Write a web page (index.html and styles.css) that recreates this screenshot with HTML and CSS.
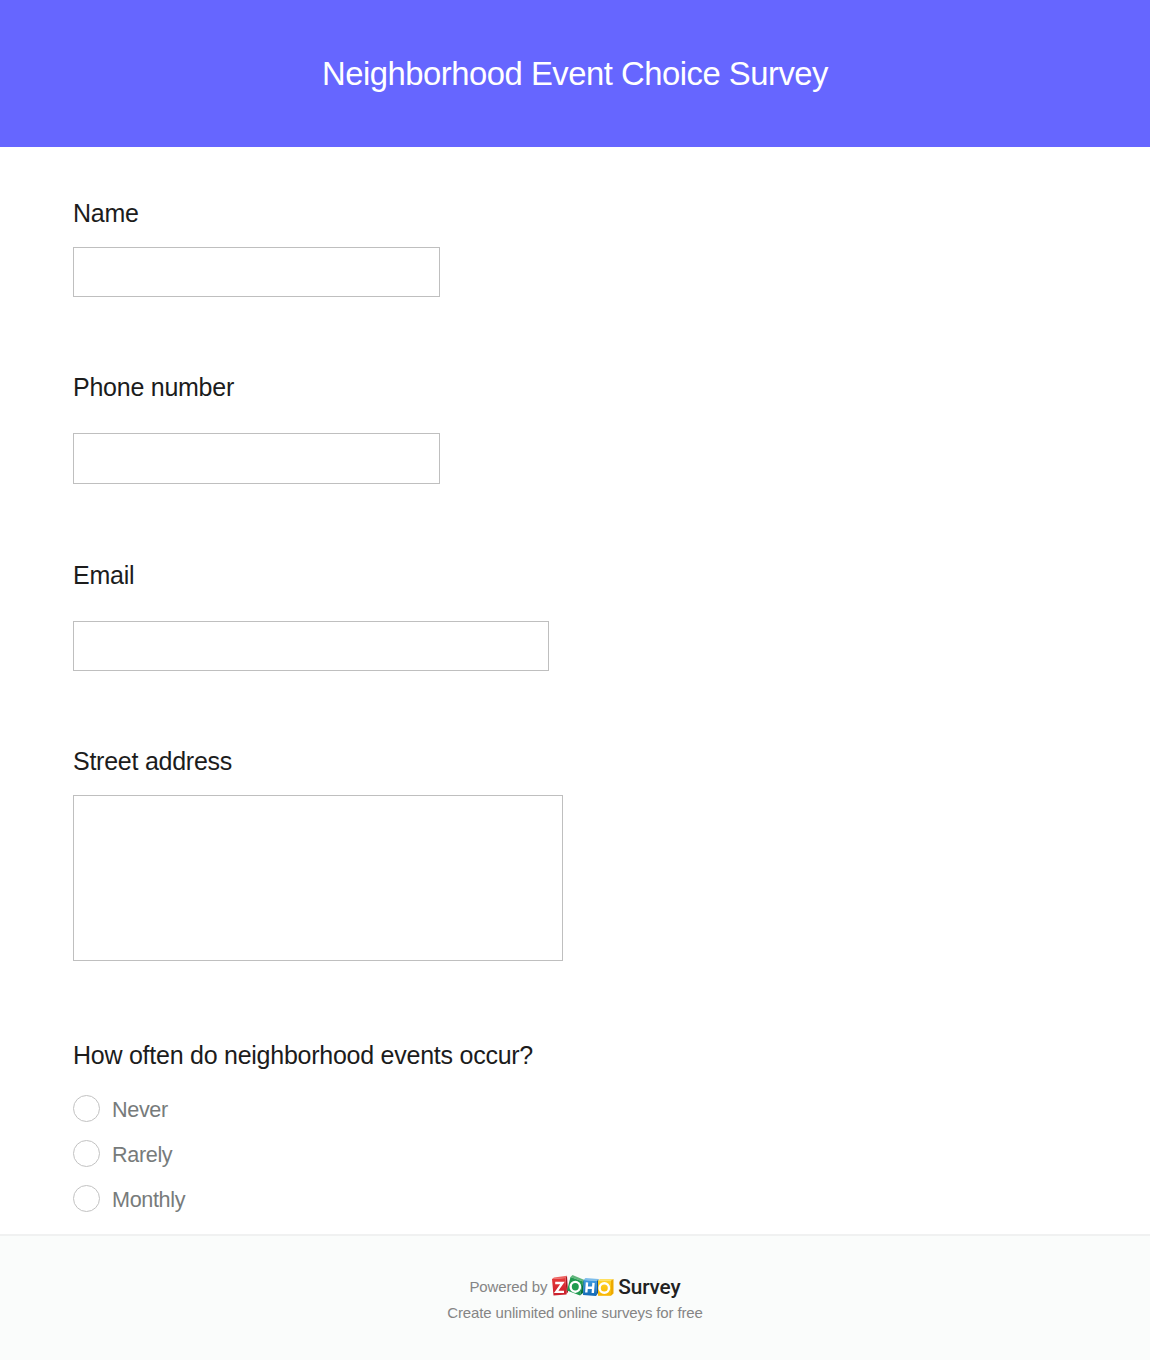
FILE: index.html
```html
<!DOCTYPE html>
<html lang="en">
<head>
<meta charset="utf-8">
<title>Neighborhood Event Choice Survey</title>
<link rel="stylesheet" href="styles.css">
</head>
<body>
<header class="banner"><h1 class="title">Neighborhood Event Choice Survey</h1></header>
<main class="survey">
  <div class="question q-name"><label class="label" for="name">Name</label><input class="field" id="name" type="text"></div>
  <div class="question q-phone"><label class="label" for="phone">Phone number</label><input class="field" id="phone" type="text"></div>
  <div class="question q-email"><label class="label" for="email">Email</label><input class="field" id="email" type="text"></div>
  <div class="question q-address"><label class="label" for="address">Street address</label><textarea class="field" id="address"></textarea></div>
  <fieldset class="question q-often">
    <legend class="label">How often do neighborhood events occur?</legend>
    <div class="options">
      <label class="option"><input class="radio" type="radio" name="often"><span>Never</span></label>
      <label class="option"><input class="radio" type="radio" name="often"><span>Rarely</span></label>
      <label class="option"><input class="radio" type="radio" name="often"><span>Monthly</span></label>
    </div>
  </fieldset>
</main>
<footer class="footer">
  <div class="powered">
    <span class="by">Powered by</span>
    <svg class="logo" width="62" height="22" viewBox="0 0 62 22" aria-label="Zoho">
      <defs>
        <linearGradient id="red" x2="0" y2="1"><stop stop-color="#e63a3a"/><stop offset="1" stop-color="#c91f2b"/></linearGradient>
        <linearGradient id="blue" x2="0" y2="1"><stop stop-color="#3e9be0"/><stop offset="1" stop-color="#1269b4"/></linearGradient>
        <linearGradient id="gold" x2="0" y2="1"><stop stop-color="#ffd329"/><stop offset="1" stop-color="#f8b500"/></linearGradient>
      </defs>
      <path d="M0 4 2 2.500 15 .8 13.500 3z" fill="#ee6461"/>
      <path d="M13.500 3 15 .8 16 17 14.500 19z" fill="#a91520"/>
      <path d="M0 4 13.500 3 14.500 19.500 1.500 20.500z" fill="url(#red)"/>
      <path d="M3.200 8h7.300L4.200 16.800H12" fill="none" stroke="#fff" stroke-width="2.300"/>
      <path d="M18.500 2 20.500 0 32.500 5 31 6.500z" fill="#61b67b"/>
      <path d="M18.500 2 31 6.500 28 20.500 15 15.500z" fill="#209b50"/>
      <path d="M31 6.500 32.500 5 31 18 28 20.500z" fill="#087138"/>
      <ellipse cx="23.300" cy="11.800" rx="4.700" ry="4.900" fill="none" stroke="#fff" stroke-width="2.400"/>
      <path d="M31.500 5 33.500 3 46.500 4 45 6z" fill="#7dbdea"/>
      <path d="M31.500 5 45 6 44 21 31 20z" fill="url(#blue)"/>
      <path d="M45 6 46.500 4 46 18 44 21z" fill="#0b559a"/>
      <path d="M35 7.300 34.300 17.500M41.500 7.800l-.7 10.200M35 12.700h6" fill="none" stroke="#fff" stroke-width="2.400"/>
      <path d="M46 5.500 48 4h13.500L59 5.500z" fill="#ffe05e"/>
      <path d="M46 5.500h13v15.300H46z" fill="url(#gold)"/>
      <path d="M59 5.500 61.500 4v14.500L59 20.800z" fill="#eda900"/>
      <circle cx="52.300" cy="13" r="4.700" fill="none" stroke="#fff" stroke-width="2.400"/>
    </svg>
    <span class="product">Survey</span>
  </div>
  <div class="tagline">Create unlimited online surveys for free</div>
</footer>
</body>
</html>
```
FILE: styles.css
```css
* { box-sizing: border-box; }
body {
  margin: 0;
  height: 1360px;
  display: flex;
  flex-direction: column;
  background: #fff;
  color: #1c1c1c;
  font-family: "Liberation Sans", Arial, sans-serif;
}
.banner {
  height: 147px;
  display: flex;
  align-items: center;
  justify-content: center;
  padding-top: 1px;
  background: #6666ff;
}
.title { margin: 0; color: #fff; font-size: 32.8px; font-weight: 400; letter-spacing: -.48px; line-height: 38px; }
.survey { height: 1087px; padding: 53px 73px 0; }
.question { display: flex; flex-direction: column; margin: 0; padding: 0; border: 0; }
.label { display: block; height: 28px; padding: 0; font-size: 25px; letter-spacing: -.25px; line-height: 26px; white-space: nowrap; }
.field {
  display: block;
  width: 367px;
  height: 50px;
  margin: 0;
  padding: 8px 12px;
  border: 1px solid #bfbfbf;
  border-radius: 0;
  background: #fff;
  font: 22px "Liberation Sans", Arial, sans-serif;
  outline: 0;
  resize: none;
}
.q-name { height: 174px; gap: 19px; }
.q-phone { height: 188px; gap: 31px; }
.q-phone .field { height: 51px; }
.q-email { height: 186px; gap: 31px; }
.q-email .field { width: 476px; }
.q-address { height: 294px; gap: 19px; }
.q-address .field { width: 490px; height: 166px; }
.options { display: flex; flex-direction: column; gap: 17px; padding-top: 24px; }
.option { display: flex; align-items: center; gap: 12px; height: 28px; color: #777b7b; font-size: 21.6px; letter-spacing: -.35px; line-height: 24px; }
.option span { padding-top: 3px; }
.radio { appearance: none; width: 27px; height: 27px; margin: 0; border: 1px solid #c2c2c2; border-radius: 50%; background: #fff; }
.footer {
  flex: 1;
  display: flex;
  flex-direction: column;
  align-items: center;
  padding-top: 37px;
  border-top: 2px solid #f0f1f1;
  background: #fafcfb;
  color: #858585;
  font-size: 15px;
  letter-spacing: -.14px;
  line-height: 18px;
}
.powered { display: flex; align-items: center; height: 26px; white-space: nowrap; }
.by { padding-top: 2px; }
.logo { margin: 0 4px 0 5px; }
.product { padding-top: 2px; color: #222; font-family: Roboto, sans-serif; font-size: 20.8px; font-weight: 500; line-height: 24px; }
.tagline { margin-top: 5px; }
```
